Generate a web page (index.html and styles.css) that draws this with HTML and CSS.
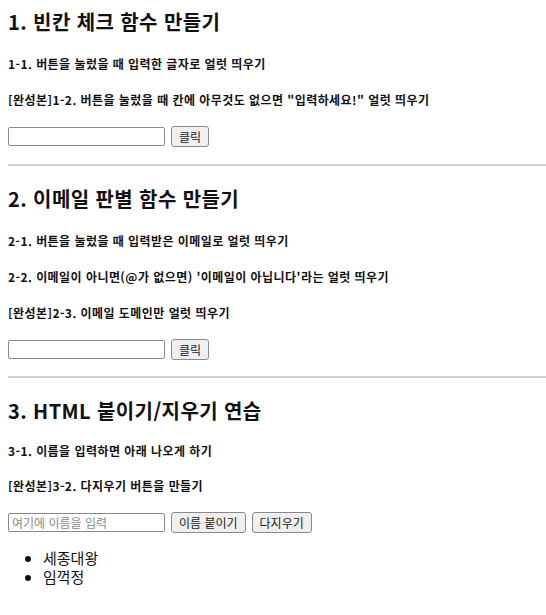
FILE: index.html
```html
<!DOCTYPE html>
<html lang="ko">
<head>
<meta charset="utf-8">
<title>JS 연습</title>
<link rel="stylesheet" href="styles.css">
</head>
<body>
  <section class="part">
    <h1 class="title">1. 빈칸 체크 함수 만들기</h1>
    <h4 class="task">1-1. 버튼을 눌렀을 때 입력한 글자로 얼럿 띄우기</h4>
    <h4 class="task">[완성본]1-2. 버튼을 눌렀을 때 칸에 아무것도 없으면 "입력하세요!" 얼럿 띄우기</h4>
    <div class="row">
      <input class="field" type="text">
      <button class="btn" type="button">클릭</button>
    </div>
  </section>
  <hr class="divider">
  <section class="part">
    <h1 class="title">2. 이메일 판별 함수 만들기</h1>
    <h4 class="task">2-1. 버튼을 눌렀을 때 입력받은 이메일로 얼럿 띄우기</h4>
    <h4 class="task">2-2. 이메일이 아니면(@가 없으면) '이메일이 아닙니다'라는 얼럿 띄우기</h4>
    <h4 class="task">[완성본]2-3. 이메일 도메인만 얼럿 띄우기</h4>
    <div class="row">
      <input class="field" type="text">
      <button class="btn" type="button">클릭</button>
    </div>
  </section>
  <hr class="divider">
  <section class="part part-last">
    <h1 class="title">3. HTML 붙이기/지우기 연습</h1>
    <h4 class="task">3-1. 이름을 입력하면 아래 나오게 하기</h4>
    <h4 class="task">[완성본]3-2. 다지우기 버튼을 만들기</h4>
    <div class="row">
      <input class="field" type="text" placeholder="여기에 이름을 입력">
      <button class="btn" type="button">이름 붙이기</button>
      <button class="btn" type="button">다지우기</button>
    </div>
    <ul class="names">
      <li>세종대왕</li>
      <li>임꺽정</li>
    </ul>
  </section>
</body>
</html>
```
FILE: styles.css
```css
html, body {
  background: #ffffff;
}
body {
  margin: 8px 0 0 8px;
  font-family: "Noto Sans CJK KR", "Noto Sans", sans-serif;
  color: #111;
}
.title {
  margin: 0;
  font-size: 20px;
  line-height: 28px;
  letter-spacing: 0.4px;
  font-weight: 700;
}
.task {
  margin: 20px 0 0;
  font-size: 12px;
  line-height: 16px;
  letter-spacing: 0.45px;
  font-weight: 700;
}
.part-last .task:first-of-type {
  margin-top: 18px;
}
.part-last .task + .task {
  margin-top: 19px;
}
.row {
  display: flex;
  align-items: center;
  gap: 6px;
  margin-top: 18px;
  height: 21px;
}
.field {
  box-sizing: border-box;
  width: 157px;
  height: 19px;
  margin: 0;
  padding: 1px 3px;
  border: 1px solid #8a8a8a;
  border-radius: 2px;
  font-family: inherit;
  font-size: 12px;
}
.field::placeholder {
  color: #8a8a8a;
}
.btn {
  box-sizing: border-box;
  height: 21px;
  margin: 0;
  padding: 0 7px;
  border: 1px solid #8a8a8a;
  border-radius: 3px;
  background: #efefef;
  color: #222;
  font-family: inherit;
  font-size: 12px;
  line-height: 19px;
}
.divider {
  margin: 17px 0 19px;
  height: 0;
  border: 0;
  border-top: 2px solid #d2d2d2;
}
.part:nth-of-type(2) + .divider {
  margin-top: 16px;
}
.names {
  margin: 15px 0 0;
  padding-left: 35px;
  font-size: 15px;
  line-height: 19px;
}
```
